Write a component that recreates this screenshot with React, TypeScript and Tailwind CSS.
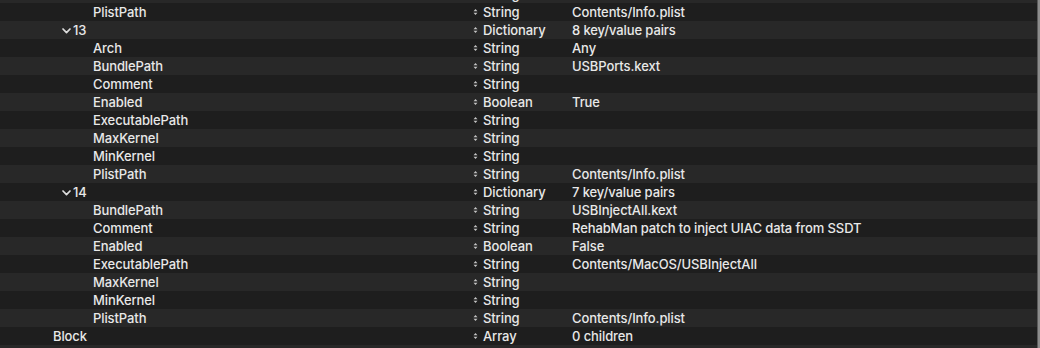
import React from "react";

type Row = {
  key: string;
  level: number;
  type: string;
  value: string;
  open?: boolean;
};

const rows: Row[] = [
  { key: "MinKernel", level: 2, type: "String", value: "" },
  { key: "PlistPath", level: 2, type: "String", value: "Contents/Info.plist" },
  { key: "13", level: 1, type: "Dictionary", value: "8 key/value pairs", open: true },
  { key: "Arch", level: 2, type: "String", value: "Any" },
  { key: "BundlePath", level: 2, type: "String", value: "USBPorts.kext" },
  { key: "Comment", level: 2, type: "String", value: "" },
  { key: "Enabled", level: 2, type: "Boolean", value: "True" },
  { key: "ExecutablePath", level: 2, type: "String", value: "" },
  { key: "MaxKernel", level: 2, type: "String", value: "" },
  { key: "MinKernel", level: 2, type: "String", value: "" },
  { key: "PlistPath", level: 2, type: "String", value: "Contents/Info.plist" },
  { key: "14", level: 1, type: "Dictionary", value: "7 key/value pairs", open: true },
  { key: "BundlePath", level: 2, type: "String", value: "USBInjectAll.kext" },
  { key: "Comment", level: 2, type: "String", value: "RehabMan patch to inject UIAC data from SSDT" },
  { key: "Enabled", level: 2, type: "Boolean", value: "False" },
  { key: "ExecutablePath", level: 2, type: "String", value: "Contents/MacOS/USBInjectAll" },
  { key: "MaxKernel", level: 2, type: "String", value: "" },
  { key: "MinKernel", level: 2, type: "String", value: "" },
  { key: "PlistPath", level: 2, type: "String", value: "Contents/Info.plist" },
  { key: "Block", level: 0, type: "Array", value: "0 children" },
  { key: "", level: 0, type: "", value: "" },
];

const indent = ["pl-[53px]", "pl-[62px]", "pl-[93px]"];

const Stepper = () => (
  <svg width="5" height="8" viewBox="0 0 5 8" className="shrink-0">
    <path d="M0.5 3.2 L2.5 1 L4.5 3.2 Z" fill="#c4c4c4" />
    <path d="M0.5 4.8 L2.5 7 L4.5 4.8 Z" fill="#c4c4c4" />
  </svg>
);

const Chevron = () => (
  <svg width="9" height="6" viewBox="0 0 9 6" className="shrink-0 mt-[2px]">
    <path d="M1 1 L4.5 4.6 L8 1" stroke="#dedede" strokeWidth="1.7" fill="none" strokeLinecap="round" strokeLinejoin="round" />
  </svg>
);

export default function App() {
  return (
    <main
      className="w-[1040px] h-[348px] overflow-hidden bg-[#1e1e1e] flex text-[13px] font-medium tracking-[-0.1px] text-[#e8e8e8]"
      style={{ fontFamily: "Inter, 'Noto Sans', sans-serif" }}
    >
      <div className="flex-1 overflow-hidden">
        <div className="-mt-[15px] flex flex-col">
          {rows.map((row, i) => (
            <div
              key={i}
              className={`h-[18px] flex items-center leading-[18px] ${
                i % 2 === 0 ? "bg-[#282828]" : "bg-[#1e1e1e]"
              }`}
            >
              <div className={`w-[473px] flex items-center ${indent[row.level]}`}>
                {row.open && <Chevron />}
                <span className={row.open ? "ml-[2px]" : ""}>{row.key}</span>
              </div>
              <div className="w-[99px] flex items-center gap-[5px]">
                {row.type && <Stepper />}
                <span>{row.type}</span>
              </div>
              <div className="flex-1">{row.value}</div>
            </div>
          ))}
        </div>
      </div>
      <div className="w-[3px] h-full bg-[#8c8c8c] border-l border-[#5a5a5a]" />
    </main>
  );
}
